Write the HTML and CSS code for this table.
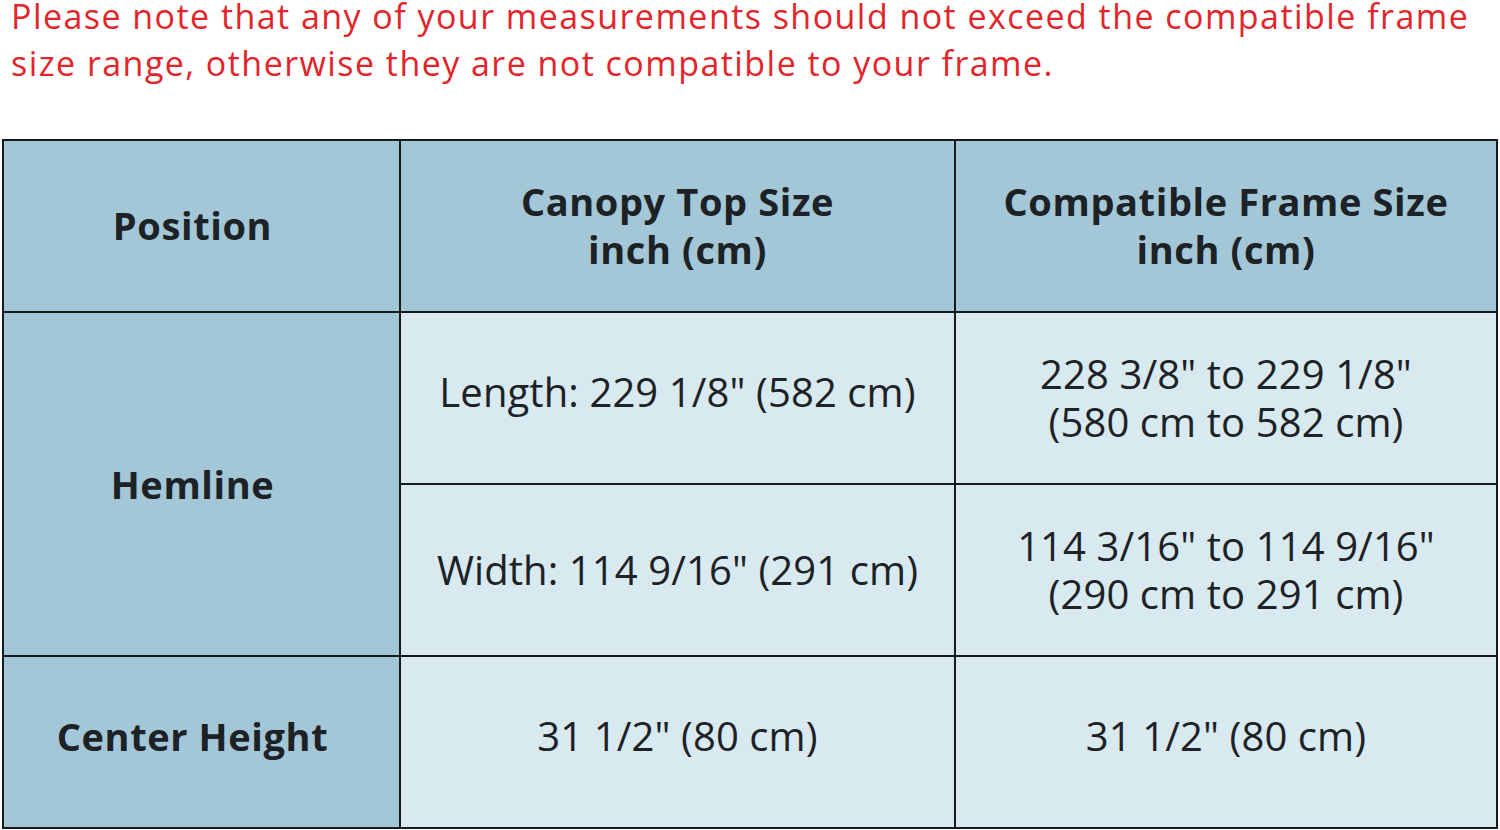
FILE: index.html
```
<!DOCTYPE html>
<html>
<head>
<meta charset="utf-8">
<link rel="stylesheet" href="styles.css">
</head>
<body>
<p class="note">Please note that any of your measurements should not exceed the compatible frame<br>size range, otherwise they are not compatible to your frame.</p>
<table class="size-table">
  <colgroup>
    <col class="c1"><col class="c2"><col class="c3">
  </colgroup>
  <tr class="head">
    <th class="pos">Position</th>
    <th>Canopy Top Size<br>inch (cm)</th>
    <th>Compatible Frame Size<br>inch (cm)</th>
  </tr>
  <tr>
    <th class="pos" rowspan="2">Hemline</th>
    <td class="up">Length: 229 1/8" (582 cm)</td>
    <td>228 3/8" to 229 1/8"<br>(580 cm to 582 cm)</td>
  </tr>
  <tr>
    <td>Width: 114 9/16" (291 cm)</td>
    <td>114 3/16" to 114 9/16"<br>(290 cm to 291 cm)</td>
  </tr>
  <tr class="last">
    <th class="pos">Center Height</th>
    <td>31 1/2" (80 cm)</td>
    <td>31 1/2" (80 cm)</td>
  </tr>
</table>
</body>
</html>
```
FILE: styles.css
```
html, body {
  margin: 0;
  padding: 0;
  background: #ffffff;
}
body {
  font-family: "Open Sans", "Liberation Sans", sans-serif;
  width: 1500px;
  height: 830px;
  overflow: hidden;
}
.note {
  margin: -7px 0 0 0;
  padding: 0 0 0 11px;
  font-size: 34px;
  line-height: 47px;
  color: #e2252b;
  letter-spacing: 1.45px;
  white-space: nowrap;
}
.size-table {
  margin: 52px 0 0 2px;
  border-collapse: collapse;
  table-layout: fixed;
  width: 1494px;
  color: #1c2226;
}
.c1 { width: 397px; }
.c2 { width: 555px; }
.c3 { width: 542px; }
.size-table tr {
  height: 172px;
}
.size-table th,
.size-table td {
  border: 2.5px solid #161a1c;
  text-align: center;
  vertical-align: middle;
  padding: 0;
  line-height: 48px;
}
.size-table th {
  background: #a3c7d6;
  font-weight: 700;
  font-size: 38px;
  letter-spacing: 0.6px;
}
.size-table td {
  background: #d8e9ef;
  font-weight: 400;
  font-size: 40px;
  letter-spacing: 0.1px;
}
.size-table th.pos {
  padding-right: 18px;
}
.head th {
  padding-top: 0;
  padding-bottom: 2px;
}
.size-table td.up,
.last th,
.last td {
  padding-bottom: 13px;
}
```
